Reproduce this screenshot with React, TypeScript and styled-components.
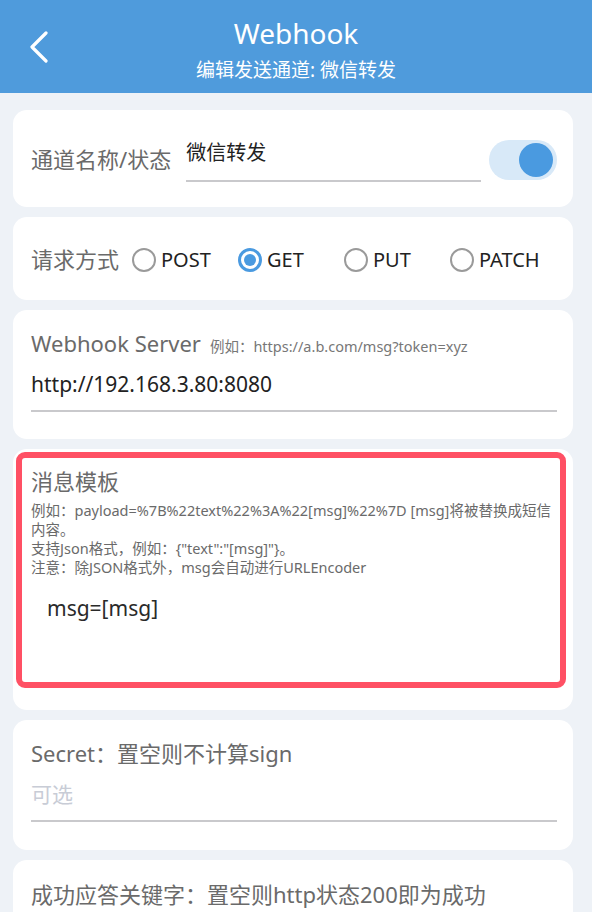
import React, { useState } from 'react';
import styled, { createGlobalStyle } from 'styled-components';

const GlobalStyle = createGlobalStyle`
  html, body {
    margin: 0;
    padding: 0;
    height: 912px;
    overflow: hidden;
    background: #eef2f7;
    font-family: "Noto Sans", "Noto Sans CJK SC", sans-serif;
  }
  * { box-sizing: border-box; }
`;

const Page = styled.div`
  display: flex;
  flex-direction: column;
  height: 912px;
  background: #eef2f7;
`;

const Header = styled.div`
  display: grid;
  grid-template-columns: 70px 1fr 70px;
  align-items: center;
  height: 93px;
  background: #4f9bdc;
  color: #fff;
`;

const BackButton = styled.button`
  display: flex;
  align-items: center;
  justify-content: flex-start;
  padding: 0 0 0 29px;
  height: 93px;
  background: none;
  border: none;
  cursor: pointer;
`;

const HeaderTitles = styled.div`
  display: flex;
  flex-direction: column;
  align-items: center;
  padding-top: 5px;
`;

const Title = styled.div`
  font-size: 28px;
  line-height: 36px;
`;

const Subtitle = styled.div`
  font-size: 19px;
  line-height: 26px;
  margin-top: 6px;
`;

const List = styled.div`
  display: flex;
  flex-direction: column;
  gap: 10px;
  padding: 17px 19px 0 13px;
`;

const Card = styled.div<{ pad?: string }>`
  background: #fff;
  border-radius: 14px;
  padding: ${(p) => p.pad ?? '0'};
`;

const Row = styled.div<{ h: number }>`
  display: flex;
  align-items: center;
  height: ${(p) => p.h}px;
  padding: 0 16px 0 18px;
`;

const Label = styled.div`
  font-size: 22px;
  line-height: 30px;
  color: #6a6a6a;
  white-space: nowrap;
`;

const InlineField = styled.div`
  flex: 1;
  margin: 0 8px 0 15px;
  padding-bottom: 13px;
  border-bottom: 2px solid #c9c9cc;
  font-size: 20px;
  line-height: 28px;
  color: #222;
  transform: translateY(2px);
`;

const Toggle = styled.div<{ on: boolean }>`
  display: flex;
  align-items: center;
  justify-content: ${(p) => (p.on ? 'flex-end' : 'flex-start')};
  width: 68px;
  height: 40px;
  padding: 0 4px;
  border-radius: 20px;
  background: ${(p) => (p.on ? '#d8e9f8' : '#e4e4e4')};
  cursor: pointer;
  transform: translateY(1px);
`;

const Knob = styled.div<{ on: boolean }>`
  width: 34px;
  height: 34px;
  border-radius: 50%;
  background: ${(p) => (p.on ? '#4a9ae0' : '#fff')};
`;

const RadioGroup = styled.div`
  display: grid;
  grid-template-columns: repeat(4, 106px);
  margin-left: 13px;
  transform: translateY(1px);
`;

const RadioItem = styled.label`
  display: flex;
  align-items: center;
  gap: 5px;
  font-size: 20px;
  line-height: 28px;
  color: #222;
  cursor: pointer;
`;

const RadioCircle = styled.span<{ checked: boolean }>`
  display: flex;
  align-items: center;
  justify-content: center;
  width: 24px;
  height: 24px;
  border-radius: 50%;
  border: ${(p) => (p.checked ? '3px solid #4a9ae0' : '2px solid #9a9a9a')};
  &::after {
    content: '';
    width: 12px;
    height: 12px;
    border-radius: 50%;
    background: ${(p) => (p.checked ? '#4a9ae0' : 'transparent')};
  }
`;

const FieldBlock = styled.div`
  display: flex;
  flex-direction: column;
  padding: 0 16px 0 18px;
`;

const FieldHead = styled.div`
  display: flex;
  align-items: baseline;
  gap: 9px;
`;

const Hint = styled.span`
  font-size: 14.5px;
  color: #777;
`;

const InputLine = styled.div<{ placeholder?: boolean }>`
  margin-top: 11px;
  padding-bottom: 11px;
  border-bottom: 2px solid #c9c9cc;
  font-size: 21px;
  line-height: 30px;
  color: ${(p) => (p.placeholder ? '#c8ccd6' : '#222')};
`;

const Highlight = styled.div`
  height: 236px;
  border: 6px solid #ff5064;
  border-radius: 9px;
  padding: 8px 3px 0 9px;
`;

const Notes = styled.div`
  margin-top: 5px;
  font-size: 14.5px;
  line-height: 19px;
  color: #6a6a6a;
`;

const TemplateValue = styled.div`
  margin-top: 16px;
  padding-left: 16px;
  font-size: 21px;
  line-height: 30px;
  color: #2a2a2a;
`;

const methods = ['POST', 'GET', 'PUT', 'PATCH'];

export default function App() {
  const [enabled, setEnabled] = useState(true);
  const [method, setMethod] = useState('GET');

  return (
    <Page>
      <GlobalStyle />
      <Header>
        <BackButton>
          <svg width="20" height="32" viewBox="0 0 20 32">
            <polyline points="17,2 3,16 17,30" fill="none" stroke="#fff" strokeWidth="3.2" strokeLinecap="round" strokeLinejoin="round" />
          </svg>
        </BackButton>
        <HeaderTitles>
          <Title>Webhook</Title>
          <Subtitle>编辑发送通道: 微信转发</Subtitle>
        </HeaderTitles>
        <div />
      </Header>

      <List>
        <Card>
          <Row h={97}>
            <Label>通道名称/状态</Label>
            <InlineField>微信转发</InlineField>
            <Toggle on={enabled} onClick={() => setEnabled(!enabled)}>
              <Knob on={enabled} />
            </Toggle>
          </Row>
        </Card>

        <Card>
          <Row h={83}>
            <Label>请求方式</Label>
            <RadioGroup>
              {methods.map((m) => (
                <RadioItem key={m} onClick={() => setMethod(m)}>
                  <RadioCircle checked={method === m} />
                  {m}
                </RadioItem>
              ))}
            </RadioGroup>
          </Row>
        </Card>

        <Card pad="18px 0 27px">
          <FieldBlock>
            <FieldHead>
              <Label>Webhook Server</Label>
              <Hint>例如：https://a.b.com/msg?token=xyz</Hint>
            </FieldHead>
            <InputLine>http://192.168.3.80:8080</InputLine>
          </FieldBlock>
        </Card>

        <Card pad="3px 7px 22px 3px">
          <Highlight>
            <Label>消息模板</Label>
            <Notes>
              例如：payload=%7B%22text%22%3A%22[msg]%22%7D [msg]将被替换成短信内容。
              <br />
              支持Json格式，例如：{'{"text":"[msg]"}'}。
              <br />
              注意：除JSON格式外，msg会自动进行URLEncoder
            </Notes>
            <TemplateValue>msg=[msg]</TemplateValue>
          </Highlight>
        </Card>

        <Card pad="18px 0 28px">
          <FieldBlock>
            <Label>Secret：置空则不计算sign</Label>
            <InputLine placeholder>可选</InputLine>
          </FieldBlock>
        </Card>

        <Card pad="19px 0 40px">
          <FieldBlock>
            <Label>成功应答关键字：置空则http状态200即为成功</Label>
          </FieldBlock>
        </Card>
      </List>
    </Page>
  );
}
